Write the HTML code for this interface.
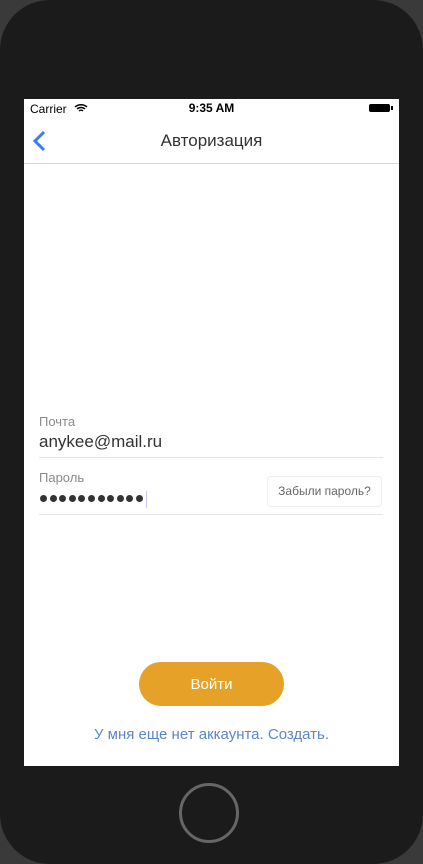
<!DOCTYPE html>
<html><head><meta charset="utf-8"><style>
html,body{margin:0;padding:0;}
body{width:423px;height:864px;background:#3a3a3a;position:relative;overflow:hidden;font-family:"Liberation Sans","DejaVu Sans",sans-serif;}
.phone{position:absolute;left:0;top:0;width:423px;height:864px;background:#1b1b1b;border-radius:50px;}
.screen{position:absolute;left:24px;top:99px;width:375px;height:667px;background:#fff;}
.abs{position:absolute;}
.d{display:inline-block;width:7px;height:7px;border-radius:50%;background:#333;margin-right:2.6px;}
</style></head><body>
<div class="phone"></div>
<div class="screen">
  <div class="abs" style="left:6px;top:3px;font-size:12px;color:#000;">Carrier</div>
  <svg class="abs" style="left:50px;top:4px" width="14" height="10" viewBox="0 0 14 10"><path d="M1 4 A9 9 0 0 1 13 4 M3 6 A6 6 0 0 1 11 6 M5 8 A3 3 0 0 1 9 8" stroke="#000" stroke-width="1.5" fill="none"/></svg>
  <div class="abs" style="left:0;width:375px;top:2px;text-align:center;font-size:12px;font-weight:bold;color:#000;">9:35 AM</div>
  <div class="abs" style="left:345px;top:5px;width:21px;height:8px;background:#000;border-radius:2px;"></div>
  <div class="abs" style="left:367px;top:7px;width:2px;height:4px;background:#000;"></div>
  <svg class="abs" style="left:8px;top:31px" width="16" height="22" viewBox="0 0 16 22"><path d="M12 2 L3 11 L12 20" stroke="#3b7cf5" stroke-width="3" fill="none"/></svg>
  <div class="abs" style="left:0;width:375px;top:32px;text-align:center;font-size:17px;color:#333;">Авторизация</div>
  <div class="abs" style="left:0;top:64px;width:375px;height:1px;background:#d8d8d8;"></div>

  <div class="abs" style="left:15px;top:315px;font-size:13px;color:#8a8a8a;">Почта</div>
  <div class="abs" style="left:15px;top:333px;font-size:17px;color:#333;">anykee@mail.ru</div>
  <div class="abs" style="left:15px;top:358px;width:344px;height:1px;background:#e6e6e6;"></div>
  <div class="abs" style="left:15px;top:371px;font-size:13px;color:#8a8a8a;">Пароль</div>
  <div class="abs" style="left:16px;top:396px;height:8px;white-space:nowrap;line-height:0;"><span class="d"></span><span class="d"></span><span class="d"></span><span class="d"></span><span class="d"></span><span class="d"></span><span class="d"></span><span class="d"></span><span class="d"></span><span class="d"></span><span class="d"></span></div>
  <div class="abs" style="left:122px;top:392px;width:1px;height:17px;background:#c8c8f0;"></div>
  <div class="abs" style="left:243px;top:377px;width:113px;height:29px;border:1px solid #eee;border-radius:4px;font-size:12px;color:#666;text-align:center;line-height:29px;">Забыли пароль?</div>
  <div class="abs" style="left:15px;top:415px;width:344px;height:1px;background:#e6e6e6;"></div>

  <div class="abs" style="left:115px;top:563px;width:145px;height:44px;background:#e5a128;border-radius:22px;color:#fff;font-size:15px;text-align:center;line-height:46px;">Войти</div>
  <div class="abs" style="left:0;width:375px;top:627px;text-align:center;font-size:15px;color:#5b87c7;">У мня еще нет аккаунта. Создать.</div>
</div>
<div class="abs" style="left:179px;top:783px;width:60px;height:60px;border:3px solid #666;border-radius:50%;box-sizing:border-box;"></div>
</body></html>
